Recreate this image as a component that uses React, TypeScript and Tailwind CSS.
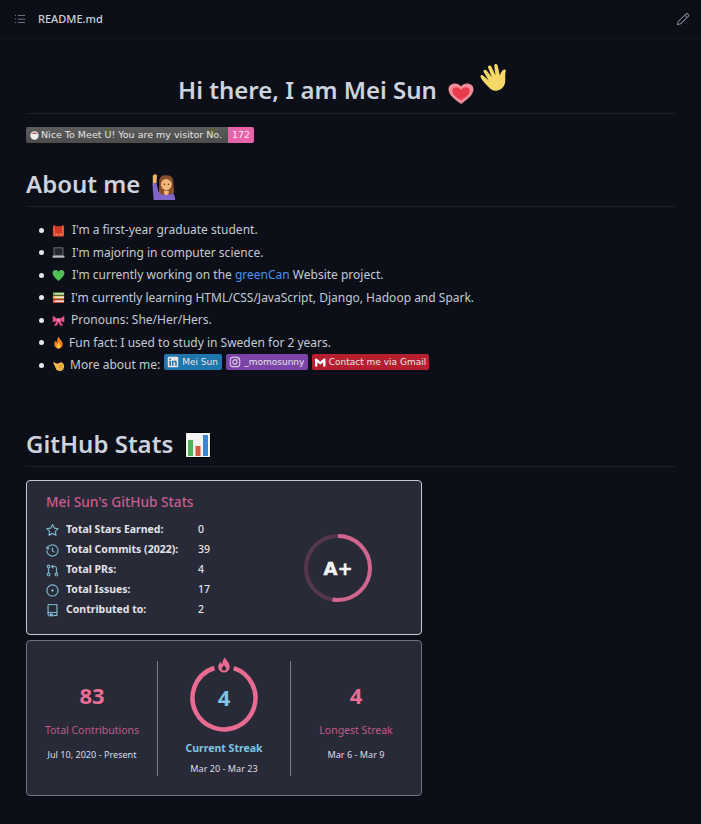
import React from 'react';
import { GoListUnordered, GoPencil, GoStar, GoHistory, GoGitPullRequest, GoIssueOpened, GoRepo } from 'react-icons/go';
import { FaLinkedin, FaInstagram } from 'react-icons/fa';
import { SiGmail } from 'react-icons/si';

const Heart = ({ color = '#ef4b5f', className = '' }: { color?: string; className?: string }) => (
  <svg viewBox="0 0 24 24" className={className}>
    <path d="M12 22 C6 17 1 13 1 7.5 C1 4 3.6 2 6.5 2 C8.8 2 10.8 3.2 12 5.2 C13.2 3.2 15.2 2 17.5 2 C20.4 2 23 4 23 7.5 C23 13 18 17 12 22Z" fill={color} />
  </svg>
);

const GlowHeart = ({ className = '' }: { className?: string }) => (
  <svg viewBox="0 0 24 24" preserveAspectRatio="none" className={className}>
    <path d="M12 23 C6 18 0.5 13.5 0.5 7.5 C0.5 3.8 3.3 1.5 6.3 1.5 C8.7 1.5 10.8 2.8 12 4.8 C13.2 2.8 15.3 1.5 17.7 1.5 C20.7 1.5 23.5 3.8 23.5 7.5 C23.5 13.5 18 18 12 23Z" fill="#f08d98" />
    <path d="M12 19 C8 16 4 13 4 9 C4 6.8 5.8 5.6 7.6 5.6 C9.4 5.6 11 6.8 12 8.6 C13 6.8 14.6 5.6 16.4 5.6 C18.2 5.6 20 6.8 20 9 C20 13 16 16 12 19Z" fill="#ea3b4c" />
  </svg>
);

const Wave = ({ className = '' }: { className?: string }) => (
  <svg viewBox="1 0.5 22 25" preserveAspectRatio="none" className={className}>
    <path d="M9 23 C5 19 2 15 1.5 13 C1 11 3 10.5 4 12 L8 16 L4 8.5 C3.2 6.8 5.4 5.6 6.4 7.2 L10.6 13 L7.6 4.6 C7 2.8 9.4 2 10.2 3.6 L13.6 11.4 L12.6 3 C12.4 1 15 0.8 15.4 2.8 L17.2 11.6 C18 9.4 18.6 7.6 20.2 6.6 C21.6 5.8 22.4 7 22 8.2 C21 11.4 22 14.6 21.4 18 C20.8 24 14 28 9 23Z" fill="#f5d766" />
  </svg>
);

const Woman = ({ className = '' }: { className?: string }) => (
  <svg viewBox="0 0 28 30" className={className}>
    <path d="M1.5 11 L6 11 L8 20 L20 20 C24 20 26 24 26 29 L3 29Z" fill="#8065c8" />
    <path d="M2 3.5 C2 2 3 1.5 3.4 3 L3.8 1.2 C4.2 0.4 5 0.6 5 1.6 L5.6 2 C6.4 2 6.6 3 6.4 4 L6 11 L2 11Z" fill="#f2b466" />
    <path d="M9 12 C8 4 12 2.5 16.5 2.5 C22 2.5 24.5 6 24 12 L25 21 L21 23 L11 23 L8.5 20Z" fill="#8a5030" />
    <ellipse cx="16.5" cy="12" rx="5.6" ry="6.6" fill="#f4b878" />
    <path d="M14 19 L19 19 L19 22 L16.5 24 L14 22Z" fill="#f4b878" />
    <path d="M11 10 C12.5 7 15 6.2 17 6.4 C19 7.4 21 8 22 10 C22.4 7 20 4.6 16.5 4.6 C13 4.6 10.6 7 11 10Z" fill="#8a5030" />
    <circle cx="14.3" cy="12" r=".8" fill="#4a2c18" />
    <circle cx="18.7" cy="12" r=".8" fill="#4a2c18" />
  </svg>
);

const Backpack = () => (
  <svg viewBox="0 0 14 14" className="w-[13px] h-[13px]">
    <path d="M1 4 C1 2 2 1.5 3 1 L4 3 L10 3 L11 1 C12 1.5 13 2 13 4 L13 12 C13 13 12 13.5 11 13.5 L3 13.5 C2 13.5 1 13 1 12Z" fill="#e8563a" />
    <rect x="3.4" y="2.4" width="7.2" height="8" rx="1.5" fill="#c93a26" />
    <circle cx="5" cy="11" r=".7" fill="#f7b27c" />
    <circle cx="9" cy="11" r=".7" fill="#f7b27c" />
  </svg>
);

const Laptop = () => (
  <svg viewBox="0 0 14 14" className="w-[13px] h-[13px]">
    <rect x="2.2" y="2" width="9.6" height="8" fill="#24262b" stroke="#8a8d92" strokeWidth=".8" />
    <rect x="0.6" y="10.4" width="12.8" height="2.2" fill="#b9bcc1" />
  </svg>
);

const Books = () => (
  <svg viewBox="0 0 14 14" className="w-[13px] h-[13px]">
    <rect x="1" y="1.5" width="12" height="3" fill="#6fb34a" />
    <rect x="3" y="2.4" width="10" height="1.2" fill="#e9e9e2" />
    <rect x="1" y="5" width="12" height="3.4" fill="#e8b24a" />
    <rect x="3" y="6" width="10" height="1.3" fill="#f1f0e9" />
    <rect x="1" y="9" width="12" height="3.8" fill="#dc5a3e" />
    <rect x="3" y="10.2" width="10" height="1.4" fill="#f1f0e9" />
  </svg>
);

const Ribbon = () => (
  <svg viewBox="0 0 14 14" className="w-[13px] h-[13px]">
    <path d="M0.8 2 L5.6 5 L8.4 5 L13.2 2 L13.2 9 L9 7.6 L11.8 13 L8.4 12 L7 8.6 L5.6 12 L2.2 13 L5 7.6 L0.8 9Z" fill="#ec4f8c" />
    <rect x="5.6" y="4.6" width="2.8" height="3.2" rx=".8" fill="#f68ab4" />
  </svg>
);

const Fire = () => (
  <svg viewBox="0 0 14 14" className="w-[13px] h-[13px]">
    <path d="M7 .5 C7.6 3 11.6 5 11.6 9 C11.6 11.8 9.6 13.6 7 13.6 C4.4 13.6 2.4 11.8 2.4 9 C2.4 7 3.4 5.8 4.2 4.8 C4.6 6 5 6.4 5.6 6.6 C5.4 4.4 6 2 7 .5Z" fill="#ee7c24" />
    <path d="M7 7 C7.6 8.4 9.2 9.4 9.2 11 C9.2 12.4 8.2 13.2 7 13.2 C5.8 13.2 4.8 12.4 4.8 11 C4.8 9.4 6.4 8.4 7 7Z" fill="#f8c53a" />
  </svg>
);

const Fist = () => (
  <svg viewBox="0 0 14 14" className="w-[13px] h-[13px]">
    <path d="M1 3.2 L6 5.2 L9.4 3.4 C11 3.4 12.6 5 13 7 C13.4 10 11.6 13 8.6 13 C6 13 4.4 11.6 3.8 9.4 L2.4 6.4Z" fill="#f1b648" />
    <path d="M7 7.4 L10.6 6.6 M7.4 9.4 L11 8.8" stroke="#c98a24" strokeWidth=".7" />
  </svg>
);

const Chart = () => (
  <svg viewBox="0 0 24 24" className="w-6 h-6 block">
    <rect x="0" y="0" width="24" height="24" fill="#f3f4f2" />
    <rect x="2" y="7" width="5" height="16" fill="#4fb154" />
    <rect x="9.5" y="13" width="5" height="10" fill="#d9573f" />
    <rect x="17" y="2" width="5" height="21" fill="#3a85d4" />
  </svg>
);

const Flame = () => (
  <svg viewBox="0 0 16 20" className="w-[14px] h-[18px] -mt-[8px]">
    <path d="M9 1 C9.6 4 14.5 6.5 14.5 12 C14.5 16 11.5 18.6 8 18.6 C4.5 18.6 1.5 16 1.5 12 C1.5 9.4 2.8 7.6 4 6.2 C4.4 7.8 5 8.6 6 9 C5.8 6 7.4 3 9 1Z M8 10 C7 12 5.4 12.8 5.4 14.4 C5.4 15.8 6.5 16.4 8 16.4 C9.5 16.4 10.6 15.8 10.6 14.4 C10.6 12.8 9 12 8 10Z" fill="#e96b92" fillRule="evenodd" />
  </svg>
);

const items = [
  { icon: <Backpack />, gap: 'gap-[7px]', body: <>I'm a first-year graduate student.</> },
  { icon: <Laptop />, gap: 'gap-[7px]', body: <>I'm majoring in computer science.</> },
  { icon: <Heart color="#4fbf56" className="w-[13px] h-[13px]" />, gap: 'gap-[7px]', body: <>I'm currently working on the <span className="text-[#4a8fe8]">greenCan</span> Website project.</> },
  { icon: <Books />, gap: 'gap-[6px]', body: <>I'm currently learning HTML/CSS/JavaScript, Django, Hadoop and Spark.</> },
  { icon: <Ribbon />, gap: 'gap-[6px]', body: <>Pronouns: She/Her/Hers.</> },
  { icon: <Fire />, gap: 'gap-[4px]', body: <>Fun fact: I used to study in Sweden for 2 years.</> },
];

const stats = [
  { icon: GoStar, label: 'Total Stars Earned:', value: '0' },
  { icon: GoHistory, label: 'Total Commits (2022):', value: '39' },
  { icon: GoGitPullRequest, label: 'Total PRs:', value: '4' },
  { icon: GoIssueOpened, label: 'Total Issues:', value: '17' },
  { icon: GoRepo, label: 'Contributed to:', value: '2' },
];

const Badge = ({ icon, label, className }: { icon: React.ReactNode; label: string; className: string }) => (
  <span className={`flex items-center gap-[3px] h-4 px-[3px] rounded-[2px] text-[9px] leading-4 whitespace-nowrap text-[#e6e6e6] font-['DejaVu_Sans'] ${className}`}>
    {icon}
    {label}
  </span>
);

export default function App() {
  return (
    <div className="w-[701px] h-[824px] overflow-hidden bg-[#0c0f18] text-[#c9d1d9] font-['Noto_Sans',sans-serif]">
      <header className="flex items-center h-[39px] pl-[13px] pr-[11px] border-b border-[#111622] text-[#8b949e]">
        <GoListUnordered className="text-[14px]" />
        <span className="ml-[11px] text-[11px] font-medium text-[#c9d1d9]">README.md</span>
        <GoPencil className="ml-auto text-[14px]" />
      </header>

      <main className="px-[26px]">
        <h1 className="flex items-end justify-center h-[75px] pb-[6px] pr-[16px] border-b border-[#1a202c] text-[24px] leading-[34px] font-semibold text-[#ccd2de] whitespace-nowrap">
          Hi there, I am Mei Sun
          <GlowHeart className="w-[26px] h-[23px] ml-[11px] mb-[2px]" />
          <Wave className="w-[27px] h-[28px] ml-[6px] mb-[16px]" />
        </h1>

        <div className="flex w-[228px] h-4 mt-[13px] rounded-[2px] overflow-hidden text-[9.5px] leading-4 font-['DejaVu_Sans'] whitespace-nowrap">
          <span className="flex items-center flex-1 gap-[2px] pl-[4px] bg-gradient-to-b from-[#5c5c5c] to-[#4c4c4c] text-[#e4e4e4]">
            <svg viewBox="0 0 10 10" className="w-[9px] h-[9px]">
              <circle cx="5" cy="5" r="4.6" fill="#eee" />
              <path d="M1.6 3.4 C3 1 7 1 8.4 3.4Z" fill="#c25b5b" />
            </svg>
            Nice To Meet U! You are my visitor No.
          </span>
          <span className="w-[26px] text-center bg-[#e963ab] text-[#f8e6f0]">172</span>
        </div>

        <h2 className="flex items-end h-[51px] mt-[13px] pb-[5px] border-b border-[#1a202c] text-[24px] leading-[34px] font-semibold text-[#ccd2de]">
          About me
          <Woman className="w-[28px] h-[28px] ml-[10px]" />
        </h2>

        <ul className="mt-[12px] pl-[13px] text-[12px] text-[#c4cad4]">
          {items.map((item, i) => (
            <li key={i} className="flex items-center h-[22.5px]">
              <span className="w-[5px] h-[5px] mr-[8px] rounded-full bg-[#e6e8ee]" />
              <span className={`flex items-center ${item.gap}`}>
                {item.icon}
                <span>{item.body}</span>
              </span>
            </li>
          ))}
          <li className="flex items-center h-[22.5px]">
            <span className="w-[5px] h-[5px] mr-[8px] rounded-full bg-[#e6e8ee]" />
            <span className="flex items-center gap-[5px]">
              <Fist />
              <span>More about me:</span>
              <span className="flex gap-[4px] -ml-[1px] -mt-[6px]">
                <Badge className="w-[58px] bg-[#1f75ad]" icon={<FaLinkedin className="text-[12px]" />} label="Mei Sun" />
                <Badge className="w-[82px] bg-[#7c44a8]" icon={<FaInstagram className="text-[12px]" />} label="_momosunny" />
                <Badge className="w-[117px] bg-[#b71f2e]" icon={<SiGmail className="text-[11px] text-white" />} label="Contact me via Gmail" />
              </span>
            </span>
          </li>
        </ul>

        <h2 className="flex items-end h-[51px] mt-[39.5px] pb-[5px] border-b border-[#1a202c] text-[24px] leading-[34px] font-semibold text-[#ccd2de]">
          GitHub Stats
          <span className="flex ml-[12px] mb-[3px] p-[1px] bg-black"><Chart /></span>
        </h2>

        <section className="flex w-[396px] h-[155px] mt-[13px] pl-[19px] pt-[10px] rounded-[4px] border border-[#c6cad2] bg-[#282a37]">
          <div className="w-[258px]">
            <p className="text-[13.7px] leading-[22px] font-medium text-[#c85c8e]">Mei Sun's GitHub Stats</p>
            <div className="mt-[7px] text-[10.5px] font-bold text-[#e2e4ea]">
              {stats.map(s => (
                <div key={s.label} className="flex items-center h-5">
                  <span className="w-5 text-[#8bc9e0]">
                    <s.icon size={13} stroke="currentColor" strokeWidth={0.4} />
                  </span>
                  <span className="w-[132px]">{s.label}</span>
                  <span className="font-medium">{s.value}</span>
                </div>
              ))}
            </div>
          </div>
          <div className="relative w-[68px] h-[68px] mt-[43px]">
            <svg viewBox="0 0 68 68" className="w-full h-full">
              <circle cx="34" cy="34" r="32" fill="none" stroke="#54364f" strokeWidth="4" />
              <circle cx="34" cy="34" r="32" fill="none" stroke="#d0658f" strokeWidth="4" strokeDasharray="106 202" transform="rotate(-90 34 34)" />
            </svg>
            <span className="absolute inset-0 flex items-center justify-center text-[18px] font-black text-[#f4f4f4] font-['DejaVu_Sans'] [-webkit-text-stroke:0.5px_#f4f4f4]">A+</span>
          </div>
        </section>

        <section className="flex items-center w-[396px] h-[156px] mt-[5px] rounded-[4px] border border-[#6f7380] bg-[#282a37] text-center">
          <div className="w-[130px] pt-[6px]">
            <p className="text-[22px] leading-[30px] font-bold text-[#e96d94]">83</p>
            <p className="mt-[12px] text-[10.5px] leading-[16px] text-[#bf5a87]">Total Contributions</p>
            <p className="mt-[10px] text-[9.1px] leading-[14px] text-[#dcdee4]">Jul 10, 2020 - Present</p>
          </div>
          <div className="w-px h-[115px] bg-[#7b7e89]" />
          <div className="flex flex-col items-center w-[132px] h-[115px] pt-[3px]">
            <div className="relative w-[68px] h-[68px]">
              <svg viewBox="0 0 68 68" className="w-full h-full">
                <circle cx="34" cy="34" r="31.5" fill="none" stroke="#e96b92" strokeWidth="4.5" strokeDasharray="178 20" transform="rotate(-72 34 34)" />
              </svg>
              <span className="absolute inset-0 flex items-center justify-center text-[22px] font-bold text-[#7fc4e2]">4</span>
              <span className="absolute inset-x-0 top-0 flex justify-center"><Flame /></span>
            </div>
            <p className="mt-[8px] text-[10.5px] leading-[16px] font-bold text-[#7fc4e2]">Current Streak</p>
            <p className="mt-[6px] text-[9.1px] leading-[14px] text-[#dcdee4]">Mar 20 - Mar 23</p>
          </div>
          <div className="w-px h-[115px] bg-[#7b7e89]" />
          <div className="flex-1 pt-[6px]">
            <p className="text-[22px] leading-[30px] font-bold text-[#e96d94]">4</p>
            <p className="mt-[12px] text-[10.5px] leading-[16px] text-[#bf5a87]">Longest Streak</p>
            <p className="mt-[10px] text-[9.1px] leading-[14px] text-[#dcdee4]">Mar 6 - Mar 9</p>
          </div>
        </section>
      </main>
    </div>
  );
}
